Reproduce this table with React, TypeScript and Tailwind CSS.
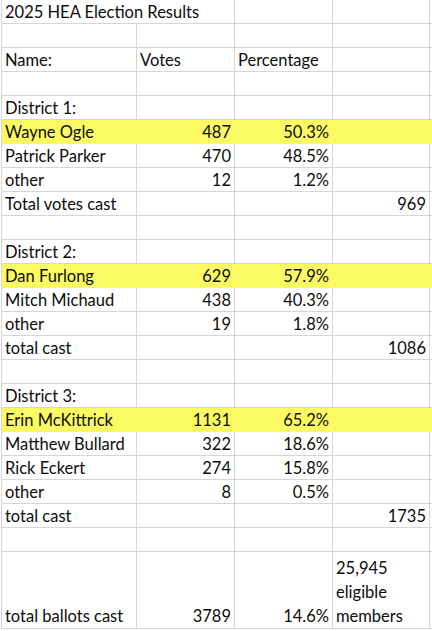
import React from "react";

type Row = {
  a?: string;
  b?: string;
  c?: string;
  d?: string;
  hl?: boolean;
  title?: boolean;
};

const rows: Row[] = [
  { title: true, a: "2025 HEA Election Results" },
  {},
  { a: "Name:", b: "Votes", c: "Percentage" },
  {},
  { a: "District 1:" },
  { a: "Wayne Ogle", b: "487", c: "50.3%", hl: true },
  { a: "Patrick Parker", b: "470", c: "48.5%" },
  { a: "other", b: "12", c: "1.2%" },
  { a: "Total votes cast", d: "969" },
  {},
  { a: "District 2:" },
  { a: "Dan Furlong", b: "629", c: "57.9%", hl: true },
  { a: "Mitch Michaud", b: "438", c: "40.3%" },
  { a: "other", b: "19", c: "1.8%" },
  { a: "total cast", d: "1086" },
  {},
  { a: "District 3:" },
  { a: "Erin McKittrick", b: "1131", c: "65.2%", hl: true },
  { a: "Matthew Bullard", b: "322", c: "18.6%" },
  { a: "Rick Eckert", b: "274", c: "15.8%" },
  { a: "other", b: "8", c: "0.5%" },
  { a: "total cast", d: "1735" },
  {},
];

function Cell({
  children,
  hl,
  right,
  span2,
  last,
}: {
  children?: React.ReactNode;
  hl?: boolean;
  right?: boolean;
  span2?: boolean;
  last?: boolean;
}) {
  return (
    <div
      className={[
        "h-[24px] border-b whitespace-nowrap overflow-visible leading-[24px]",
        hl ? "bg-[#fbfa62] border-[#fbfa62]" : "border-[#d6d6d6]",
        last ? "" : "border-r",
        right ? "text-right pr-[3px]" : "pl-[3px]",
        span2 ? "col-span-2" : "",
      ].join(" ")}
    >
      {children}
    </div>
  );
}

export default function App() {
  return (
    <div
      className="w-[432px] h-[631px] bg-white text-[#0d0d0d] text-[16.5px] overflow-hidden"
      style={{ fontFamily: "Lato, 'Liberation Sans', sans-serif" }}
    >
      <div className="ml-[1px] border-l border-[#d6d6d6] grid grid-cols-[135px_98px_98px_97px_1fr]">
        {rows.map((r, i) =>
          r.title ? (
            <React.Fragment key={i}>
              <Cell span2>{r.a}</Cell>
              <Cell />
              <Cell />
              <Cell last />
            </React.Fragment>
          ) : (
            <React.Fragment key={i}>
              <Cell hl={r.hl}>{r.a}</Cell>
              <Cell hl={r.hl} right={!!r.b && r.b !== "Votes"}>
                {r.b}
              </Cell>
              <Cell hl={r.hl} right={!!r.c && r.c !== "Percentage"}>
                {r.c}
              </Cell>
              <Cell hl={r.hl} right>
                {r.d}
              </Cell>
              <Cell hl={r.hl} last />
            </React.Fragment>
          )
        )}
        <div className="h-[77px] border-b border-r border-[#d6d6d6] pl-[3px] flex items-end leading-[24px]">
          total ballots cast
        </div>
        <div className="h-[77px] border-b border-r border-[#d6d6d6] pr-[3px] flex items-end justify-end leading-[24px]">
          3789
        </div>
        <div className="h-[77px] border-b border-r border-[#d6d6d6] pr-[3px] flex items-end justify-end leading-[24px]">
          14.6%
        </div>
        <div className="h-[77px] border-b border-r border-[#d6d6d6] pl-[3px] flex items-end leading-[24px]">
          <div>
            25,945
            <br />
            eligible
            <br />
            members
          </div>
        </div>
        <div className="h-[77px] border-b border-[#d6d6d6]" />
      </div>
    </div>
  );
}
